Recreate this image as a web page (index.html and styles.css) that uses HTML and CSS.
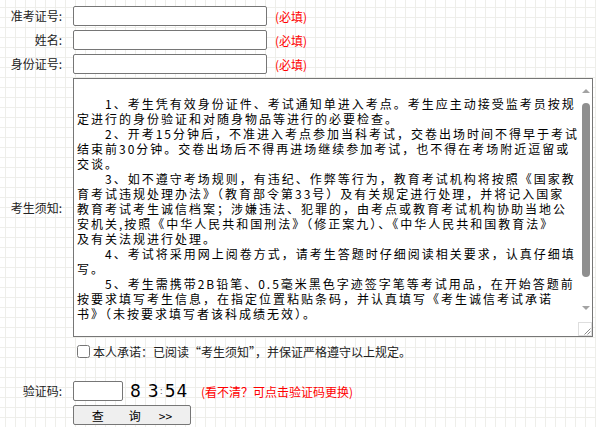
FILE: index.html
```html
<!DOCTYPE html>
<html lang="zh-CN">
<head>
<meta charset="utf-8">
<title>考生查询</title>
<link rel="stylesheet" href="styles.css">
</head>
<body>
<form class="form">
  <label class="lbl">准考证号:</label>
  <div class="field"><input class="txt" type="text"><span class="must">(必填)</span></div>

  <label class="lbl">姓名:</label>
  <div class="field"><input class="txt" type="text"><span class="must">(必填)</span></div>

  <label class="lbl">身份证号:</label>
  <div class="field"><input class="txt" type="text"><span class="must">(必填)</span></div>

  <label class="lbl">考生须知:</label>
  <div class="area-wrap"><textarea class="notice" wrap="off" readonly>

　　1、考生凭有效身份证件、考试通知单进入考点。考生应主动接受监考员按规
定进行的身份验证和对随身物品等进行的必要检查。
　　2、开考15分钟后，不准进入考点参加当科考试，交卷出场时间不得早于考试
结束前30分钟。交卷出场后不得再进场继续参加考试，也不得在考场附近逗留或
交谈。
　　3、如不遵守考场规则，有违纪、作弊等行为，教育考试机构将按照《国家教
育考试违规处理办法》（教育部令第33号）及有关规定进行处理，并将记入国家
教育考试考生诚信档案；涉嫌违法、犯罪的，由考点或教育考试机构协助当地公
安机关,按照《中华人民共和国刑法》（修正案九）、《中华人民共和国教育法》
及有关法规进行处理。
　　4、考试将采用网上阅卷方式，请考生答题时仔细阅读相关要求，认真仔细填
写。
　　5、考生需携带2B铅笔、0.5毫米黑色字迹签字笔等考试用品，在开始答题前
按要求填写考生信息，在指定位置粘贴条码，并认真填写《考生诚信考试承诺
书》（未按要求填写者该科成绩无效）。


</textarea>
    <div class="vscroll" aria-hidden="true">
      <div class="sb-btn"><span class="tri-up"></span></div>
      <div class="sb-track"><div class="sb-thumb"></div></div>
      <div class="sb-btn sb-down"><span class="tri-down"></span></div>
      <div class="resizer">
        <svg width="14" height="14" viewBox="0 0 14 14">
          <rect x="0.5" y="0.5" width="13" height="13" fill="#fff" stroke="#dedede"/>
          <path d="M12.5 6.5 L6.5 12.5 M12.5 9.5 L9.5 12.5" stroke="#8a8a8a" stroke-width="1" fill="none"/>
        </svg>
      </div>
    </div>
  </div>

  <span class="lbl"></span>
  <div class="field"><label class="agree"><input class="chk" type="checkbox">本人承诺：已阅读“考生须知”，并保证严格遵守以上规定。</label></div>

  <div class="spacer"></div>

  <label class="lbl">验证码:</label>
  <div class="field">
    <input class="code" type="text">
    <span class="captcha"><span class="d1">8</span><span class="d2">3</span><span class="dot">:</span><span class="d3">5</span><span class="d4">4</span></span>
    <span class="hint">(看不清？可点击验证码更换)</span>
  </div>

  <span class="lbl"></span>
  <div class="field"><button class="btn" type="button"><span>查</span><span class="b2">询</span><span class="b3">&gt;&gt;</span></button></div>
</form>
</body>
</html>
```

FILE: styles.css
```css
html {
  background-color: #ffffff;
  background-image:
    linear-gradient(90deg, #eeeeea 1px, transparent 1px),
    linear-gradient(180deg, #eeeeea 1px, transparent 1px);
  background-size: 10px 10px;
  background-position: 5px 7px;
  min-height: 100%;
}

body {
  margin: 0;
  font-family: "Noto Sans CJK SC", "Noto Sans", sans-serif;
  font-size: 12px;
  color: #222;
}

.form {
  display: grid;
  grid-template-columns: 62px 1fr;
  column-gap: 11px;
  row-gap: 4px;
  padding-top: 6px;
}

.lbl {
  align-self: center;
  text-align: right;
  white-space: nowrap;
  line-height: 16px;
}

.field {
  display: flex;
  align-items: center;
  height: 20px;
}

.txt {
  box-sizing: border-box;
  width: 194px;
  height: 20px;
  margin: 0;
  border: 1px solid #767676;
  border-radius: 2px;
  background: #fff;
  padding: 0 3px;
  font: inherit;
}

.must {
  margin-left: 8px;
  color: #ff0000;
}

.area-wrap {
  position: relative;
  width: 520px;
  height: 259px;
}

.notice {
  display: block;
  box-sizing: border-box;
  width: 520px;
  height: 259px;
  margin: 0;
  padding: 2px 17px 2px 3px;
  border: 1px solid #767676;
  background: #fff;
  font-family: "Noto Sans CJK SC", sans-serif;
  font-size: 12px;
  line-height: 15px;
  letter-spacing: 2px;
  color: #000;
  white-space: pre;
  overflow-x: hidden;
  overflow-y: scroll;
  scrollbar-width: none;
  resize: none;
}

.notice::-webkit-scrollbar {
  display: none;
}

/* drawn scrollbar lying over the textarea's right edge */
.vscroll {
  position: absolute;
  top: 1px;
  right: 1px;
  bottom: 1px;
  width: 14px;
  display: flex;
  flex-direction: column;
  background: #fff;
}

.sb-btn {
  height: 23px;
  display: flex;
  align-items: center;
  justify-content: center;
}

.sb-down {
  height: 22px;
}

.tri-up {
  width: 0;
  height: 0;
  border-left: 4px solid transparent;
  border-right: 4px solid transparent;
  border-bottom: 4px solid #a3a3a3;
  margin-left: 1px;
}

.tri-down {
  width: 0;
  height: 0;
  border-left: 4px solid transparent;
  border-right: 4px solid transparent;
  border-top: 4px solid #a3a3a3;
  margin-left: 1px;
}

.sb-track {
  height: 195px;
  padding-top: 1px;
  box-sizing: border-box;
  display: flex;
  justify-content: center;
}

.sb-thumb {
  width: 8px;
  height: 174px;
  margin-left: 2px;
  border-radius: 4px;
  background: #8f8f8f;
}

.resizer {
  margin-top: 3px;
  height: 14px;
  display: flex;
}

.agree {
  display: flex;
  align-items: center;
  color: #222;
}

.chk {
  width: 13px;
  height: 13px;
  margin: 0 3px 0 4px;
}

.spacer {
  grid-column: 1 / 3;
  height: 12px;
}

.code {
  box-sizing: border-box;
  width: 50px;
  height: 20px;
  margin: 0;
  border: 1px solid #767676;
  border-radius: 2px;
  background: #fff;
  padding: 0 3px;
  font: inherit;
}

.captcha {
  display: flex;
  align-items: center;
  width: 60px;
  height: 20px;
  margin-left: 6px;
  font-family: "DejaVu Sans", sans-serif;
  font-size: 17px;
  line-height: 20px;
  color: #000;
}

.captcha .d1 { margin-left: 1px; }
.captcha .d2 { margin-left: 7px; }
.captcha .dot { font-size: 9px; margin-left: 1px; color: #555; }
.captcha .d3 { margin-left: 2px; }
.captcha .d4 { margin-left: 1px; }

.hint {
  margin-left: 12px;
  color: #ff0000;
}

.btn {
  box-sizing: border-box;
  width: 118px;
  height: 20px;
  margin: 0;
  padding: 0;
  border: 1px solid #767676;
  border-radius: 2px;
  background: #efefef;
  font-family: "Noto Sans CJK SC", sans-serif;
  font-size: 12px;
  color: #000;
  display: flex;
  align-items: center;
  justify-content: center;
}

.btn .b2 { margin-left: 25px; }
.btn .b3 { margin-left: 18px; }
```
